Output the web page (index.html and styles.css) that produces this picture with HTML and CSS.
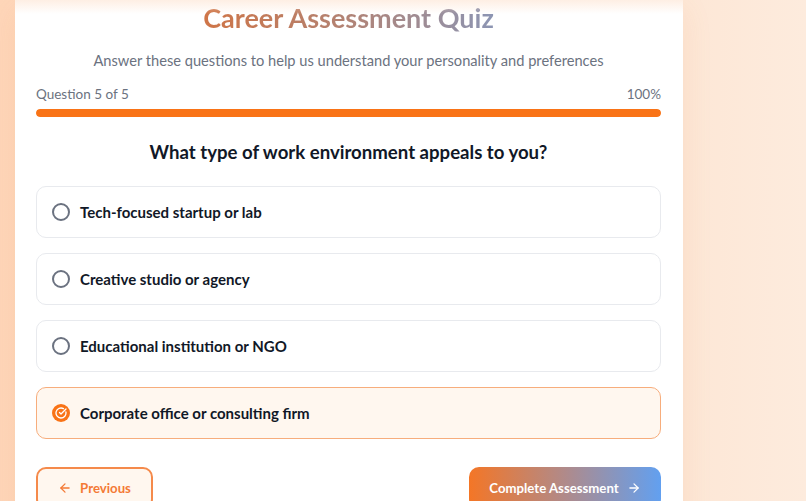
FILE: index.html
```html
<!DOCTYPE html>
<html>
<head>
<meta charset="utf-8">
<link rel="stylesheet" href="styles.css">
</head>
<body>
<div class="page">
  <main class="card">
    <h1 class="title"><span class="title-text">Career Assessment Quiz</span></h1>
    <p class="subtitle">Answer these questions to help us understand your personality and preferences</p>
    <div class="progress-meta">
      <span>Question 5 of 5</span>
      <span>100%</span>
    </div>
    <div class="progress-track"><div class="progress-fill" style="width:100%"></div></div>
    <h2 class="question">What type of work environment appeals to you?</h2>
    <div class="options">
      <div class="option"><span class="radio"></span><span class="label">Tech-focused startup or lab</span></div>
      <div class="option"><span class="radio"></span><span class="label">Creative studio or agency</span></div>
      <div class="option"><span class="radio"></span><span class="label">Educational institution or NGO</span></div>
      <div class="option selected">
        <span class="radio checked">
          <svg viewBox="0 0 24 24" width="12" height="12" fill="none" stroke="#fff" stroke-width="2.6" stroke-linecap="round" stroke-linejoin="round"><path d="M21.8 10A10 10 0 1 1 17 3.34"/><path d="m9 11 3 3L22 4"/></svg>
        </span>
        <span class="label">Corporate office or consulting firm</span>
      </div>
    </div>
    <div class="actions">
      <button class="btn btn-prev">
        <svg viewBox="0 0 24 24" width="14" height="14" fill="none" stroke="currentColor" stroke-width="2.2" stroke-linecap="round" stroke-linejoin="round"><path d="m12 19-7-7 7-7"/><path d="M19 12H5"/></svg>
        Previous
      </button>
      <button class="btn btn-next">
        Complete Assessment
        <svg viewBox="0 0 24 24" width="14" height="14" fill="none" stroke="currentColor" stroke-width="2.2" stroke-linecap="round" stroke-linejoin="round"><path d="M5 12h14"/><path d="m12 5 7 7-7 7"/></svg>
      </button>
    </div>
  </main>
</div>
</body>
</html>
```

FILE: styles.css
```css
* { box-sizing: border-box; }
html, body { margin: 0; height: 100%; }
body {
  font-family: "Lato", "Open Sans", sans-serif;
  background: linear-gradient(90deg, #fed6b9 0%, #fee0c9 40%, #fde7d6 85%, #fdebdd 100%);
  overflow: hidden;
}
.page {
  padding-left: 15px;
}
.card {
  width: 668px;
  background: #fff;
  padding: 0 22px 40px 21px;
  box-shadow: 0 10px 30px rgba(234, 140, 80, 0.12);
  border-radius: 0 0 16px 16px;
  position: relative;
}
.card::before {
  content: "";
  position: absolute;
  left: 0; right: 0; top: 0;
  height: 14px;
  background: linear-gradient(180deg, rgba(253, 225, 205, 0.55), rgba(255,255,255,0));
  pointer-events: none;
}
.title {
  margin: 0;
  text-align: center;
  font-size: 27px;
  line-height: 36px;
  font-weight: 700;
}
.title-text {
  background: linear-gradient(90deg, #cf7547 0%, #b5816f 45%, #8c95b3 100%);
  -webkit-background-clip: text;
  background-clip: text;
  color: transparent;
}
.subtitle {
  margin: 14px 0 0;
  text-align: center;
  font-size: 14.65px;
  line-height: 22px;
  color: #6b7280;
}
.progress-meta {
  margin-top: 13px;
  display: flex;
  justify-content: space-between;
  font-size: 13.5px;
  line-height: 18px;
  color: #6b7280;
}
.progress-track {
  margin-top: 6px;
  height: 8px;
  background: #fde7d6;
  border-radius: 999px;
  overflow: hidden;
}
.progress-fill {
  height: 100%;
  background: #f97316;
  border-radius: 999px;
}
.question {
  margin: 22px 0 0;
  text-align: center;
  font-size: 18.6px;
  line-height: 26px;
  font-weight: 700;
  color: #111827;
}
.options {
  margin-top: 21px;
  display: flex;
  flex-direction: column;
  gap: 15px;
}
.option {
  height: 52px;
  border: 1px solid #e8eaee;
  border-radius: 10px;
  display: flex;
  align-items: center;
  padding-left: 15px;
  gap: 10px;
  background: #fff;
}
.option.selected {
  background: #fff7ef;
  border-color: #f7ad7c;
}
.radio {
  width: 18px;
  height: 18px;
  border: 2px solid #6b7280;
  border-radius: 50%;
  flex: none;
  display: flex;
  align-items: center;
  justify-content: center;
}
.radio.checked {
  border: none;
  background: #f97316;
}
.label {
  font-size: 15px;
  font-weight: 700;
  color: #111827;
}
.actions {
  margin-top: 28px;
  display: flex;
  justify-content: space-between;
}
.btn {
  height: 42px;
  border-radius: 10px;
  font-family: inherit;
  font-size: 13.2px;
  font-weight: 700;
  display: flex;
  align-items: center;
  gap: 8px;
  cursor: pointer;
}
.btn-prev {
  width: 117px;
  justify-content: center;
  border: 2px solid #f58a4b;
  background: #fff7ef;
  color: #f47a35;
}
.btn-next {
  width: 192px;
  justify-content: center;
  border: none;
  color: #fff;
  background: linear-gradient(90deg, #f47626 0%, #b08a8a 50%, #62a0f0 100%);
}
```
